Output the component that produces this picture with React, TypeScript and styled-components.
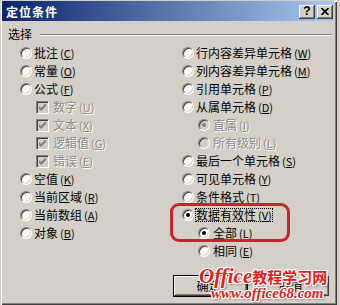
import React from "react";
import styled, { createGlobalStyle } from "styled-components";

const GlobalStyle = createGlobalStyle`
  html, body { margin: 0; padding: 0; background: #d4d0c8; }
  body { font-family: "Noto Sans CJK SC", "Noto Sans", sans-serif; }
`;

const FACE = "#d4d0c8";

const Window = styled.div`
  position: relative;
  box-sizing: border-box;
  width: 337px;
  height: 305px;
  padding: 1px 3px 3px 2px;
  background: ${FACE};
  box-shadow: inset 1px 1px 0 ${FACE}, inset 2px 2px 0 #fff, inset -1px -1px 0 #404040,
    inset -2px -2px 0 #808080;
  display: flex;
  flex-direction: column;
  font-family: "Noto Sans CJK SC", "Noto Sans", sans-serif;
  font-size: 12px;
  color: #000;
`;

const TitleBar = styled.div`
  box-sizing: border-box;
  height: 20px;
  padding: 2px 1px 0 4px;
  display: flex;
  align-items: center;
  background: linear-gradient(to right, #0a246a, #a6caf0);
`;

const Title = styled.div`
  flex: 1;
  color: #fff;
  font-weight: bold;
  font-size: 12px;
  letter-spacing: 1px;
  line-height: 14px;
`;

const CaptionButtons = styled.div`
  display: flex;
  gap: 2px;
`;

const CaptionButton = styled.div`
  box-sizing: border-box;
  width: 16px;
  height: 14px;
  background: ${FACE};
  box-shadow: inset -1px -1px 0 #404040, inset 1px 1px 0 #fff, inset -2px -2px 0 #808080,
    inset 2px 2px 0 ${FACE};
  display: flex;
  align-items: center;
  justify-content: center;
  font-family: "Liberation Sans", Arial, sans-serif;
  font-weight: bold;
  font-size: 12px;
  line-height: 11px;
  padding-bottom: 1px;
`;

const GroupHeader = styled.div`
  margin-top: 6px;
  height: 14px;
  padding: 0 2px 0 6px;
  display: flex;
  align-items: center;
`;

const GroupLabel = styled.span`
  line-height: 14px;
`;

const Rule = styled.div`
  flex: 1;
  margin-left: 8px;
  margin-top: 1px;
  height: 0;
  border-top: 1px solid #808080;
  border-bottom: 1px solid #fff;
`;

const Columns = styled.div`
  margin-top: 3px;
  padding-left: 18px;
  display: grid;
  grid-template-columns: 162px 1fr;
`;

const Column = styled.div`
  display: flex;
  flex-direction: column;
`;

const Option = styled.div<{ $indent?: number; $gap?: number }>`
  height: 18px;
  display: flex;
  align-items: center;
  padding-left: ${(p) => p.$indent ?? 0}px;
  gap: ${(p) => p.$gap ?? 1}px;
`;

const Radio = styled.span<{ $checked?: boolean; $disabled?: boolean }>`
  position: relative;
  flex: none;
  box-sizing: border-box;
  width: 12px;
  height: 12px;
  border-radius: 50%;
  border: 1px solid;
  border-color: #808080 #fff #fff #808080;
  background: ${(p) => (p.$disabled ? FACE : "#fff")};
  box-shadow: inset 1px 1px 0 #404040, inset -1px -1px 0 ${FACE};
  &::after {
    content: "";
    display: ${(p) => (p.$checked ? "block" : "none")};
    position: absolute;
    left: 3px;
    top: 3px;
    width: 4px;
    height: 4px;
    border-radius: 50%;
    background: ${(p) => (p.$disabled ? "#808080" : "#000")};
  }
`;

const CheckBox = styled.span`
  flex: none;
  box-sizing: border-box;
  width: 13px;
  height: 13px;
  border: 1px solid;
  border-color: #808080 #fff #fff #808080;
  background: ${FACE};
  box-shadow: inset 1px 1px 0 #404040, inset -1px -1px 0 ${FACE};
  display: flex;
  align-items: center;
  justify-content: center;
`;

const Label = styled.span<{ $disabled?: boolean; $focus?: boolean }>`
  box-sizing: border-box;
  line-height: 12px;
  border: 1px ${(p) => (p.$focus ? "dotted #000" : "solid transparent")};
  white-space: nowrap;
  color: ${(p) => (p.$disabled ? "#8a8a8a" : "#000")};
  text-shadow: ${(p) => (p.$disabled ? "1px 1px 0 #fff" : "none")};
`;

const Key = styled.span`
  margin-left: 2px;
  font-size: 11px;
  u { text-decoration-thickness: 1px; text-underline-offset: 1px; }
`;

const ButtonRow = styled.div`
  margin-top: 15px;
  padding-right: 4px;
  display: flex;
  justify-content: flex-end;
  gap: 7px;
`;

const PushButton = styled.div<{ $default?: boolean }>`
  box-sizing: border-box;
  width: 75px;
  height: 22px;
  padding-right: 4px;
  display: flex;
  align-items: center;
  justify-content: center;
  background: ${FACE};
  border: 1px solid ${(p) => (p.$default ? "#000" : FACE)};
  box-shadow: inset -1px -1px 0 #404040, inset 1px 1px 0 #fff, inset -2px -2px 0 #808080,
    inset 2px 2px 0 ${FACE};
  line-height: 12px;
`;

const Highlight = styled.div`
  position: absolute;
  left: 170px;
  top: 203px;
  width: 120px;
  height: 39px;
  box-sizing: border-box;
  border: 3px solid #cc2229;
  border-radius: 9px;
  pointer-events: none;
`;

const outline =
  "1px 0 #fff, -1px 0 #fff, 0 1px #fff, 0 -1px #fff, 1px 1px #fff, -1px -1px #fff, 1px -1px #fff, -1px 1px #fff, 2px 2px 2px rgba(0,0,0,0.35)";

const Watermark = styled.div`
  position: absolute;
  left: 199px;
  top: 266px;
  display: flex;
  flex-direction: column;
  color: #e3211c;
  pointer-events: none;
`;

const MarkLine1 = styled.div`
  display: flex;
  align-items: baseline;
  height: 21px;
  white-space: nowrap;
  text-shadow: ${outline};
`;

const MarkLatin = styled.span`
  font-family: "Liberation Serif", serif;
  font-style: italic;
  font-weight: bold;
  font-size: 21px;
  line-height: 21px;
`;

const MarkCjk = styled.span`
  font-family: "Noto Sans CJK SC", sans-serif;
  font-weight: bold;
  font-size: 15px;
  line-height: 21px;
`;

const MarkLine2 = styled.div`
  margin-left: 12px;
  font-family: "Liberation Serif", serif;
  font-style: italic;
  font-weight: bold;
  font-size: 15px;
  line-height: 13px;
  white-space: nowrap;
  text-shadow: ${outline};
`;

const CheckMark = () => (
  <svg width="7" height="7" viewBox="0 0 7 7">
    <path d="M0 2 L2 4 L6 0 L7 0 L7 2 L2 7 L0 5 Z" fill="#808080" />
  </svg>
);

const CloseGlyph = () => (
  <svg width="8" height="7" viewBox="0 0 8 7">
    <path d="M0.5 0 L7.5 7 M7.5 0 L0.5 7" stroke="#000" strokeWidth="1.6" />
  </svg>
);

type Item = {
  text: string;
  k: string;
  kind?: "radio" | "check";
  indent?: number;
  checked?: boolean;
  disabled?: boolean;
  focus?: boolean;
};

const left: Item[] = [
  { text: "批注", k: "C" },
  { text: "常量", k: "O" },
  { text: "公式", k: "F" },
  { text: "数字", k: "U", kind: "check", indent: 16, checked: true, disabled: true },
  { text: "文本", k: "X", kind: "check", indent: 16, checked: true, disabled: true },
  { text: "逻辑值", k: "G", kind: "check", indent: 16, checked: true, disabled: true },
  { text: "错误", k: "E", kind: "check", indent: 16, checked: true, disabled: true },
  { text: "空值", k: "K" },
  { text: "当前区域", k: "R" },
  { text: "当前数组", k: "A" },
  { text: "对象", k: "B" },
];

const right: Item[] = [
  { text: "行内容差异单元格", k: "W" },
  { text: "列内容差异单元格", k: "M" },
  { text: "引用单元格", k: "P" },
  { text: "从属单元格", k: "D" },
  { text: "直属", k: "I", indent: 16, checked: true, disabled: true },
  { text: "所有级别", k: "L", indent: 16, disabled: true },
  { text: "最后一个单元格", k: "S" },
  { text: "可见单元格", k: "Y" },
  { text: "条件格式", k: "T" },
  { text: "数据有效性", k: "V", checked: true, focus: true },
  { text: "全部", k: "L", indent: 16, checked: true },
  { text: "相同", k: "E", indent: 16 },
];

const Row = ({ item }: { item: Item }) => {
  const isCheck = item.kind === "check";
  const gap = isCheck ? 3 : item.indent ? 2 : 1;
  return (
    <Option $indent={item.indent} $gap={gap}>
      {isCheck ? (
        <CheckBox>{item.checked && <CheckMark />}</CheckBox>
      ) : (
        <Radio $checked={item.checked} $disabled={item.disabled} />
      )}
      <Label $disabled={item.disabled} $focus={item.focus}>
        {item.text}
        <Key>
          (<u>{item.k}</u>)
        </Key>
      </Label>
    </Option>
  );
};

export default function App() {
  return (
    <>
      <GlobalStyle />
      <Window>
        <TitleBar>
          <Title>定位条件</Title>
          <CaptionButtons>
            <CaptionButton>?</CaptionButton>
            <CaptionButton>
              <CloseGlyph />
            </CaptionButton>
          </CaptionButtons>
        </TitleBar>
        <GroupHeader>
          <GroupLabel>选择</GroupLabel>
          <Rule />
        </GroupHeader>
        <Columns>
          <Column>
            {left.map((it, i) => (
              <Row key={i} item={it} />
            ))}
          </Column>
          <Column>
            {right.map((it, i) => (
              <Row key={i} item={it} />
            ))}
          </Column>
        </Columns>
        <ButtonRow>
          <PushButton $default>确定</PushButton>
          <PushButton>取消</PushButton>
        </ButtonRow>
        <Highlight />
        <Watermark>
          <MarkLine1>
            <MarkLatin>Office</MarkLatin>
            <MarkCjk>教程学习网</MarkCjk>
          </MarkLine1>
          <MarkLine2>www.office68.com</MarkLine2>
        </Watermark>
      </Window>
    </>
  );
}
